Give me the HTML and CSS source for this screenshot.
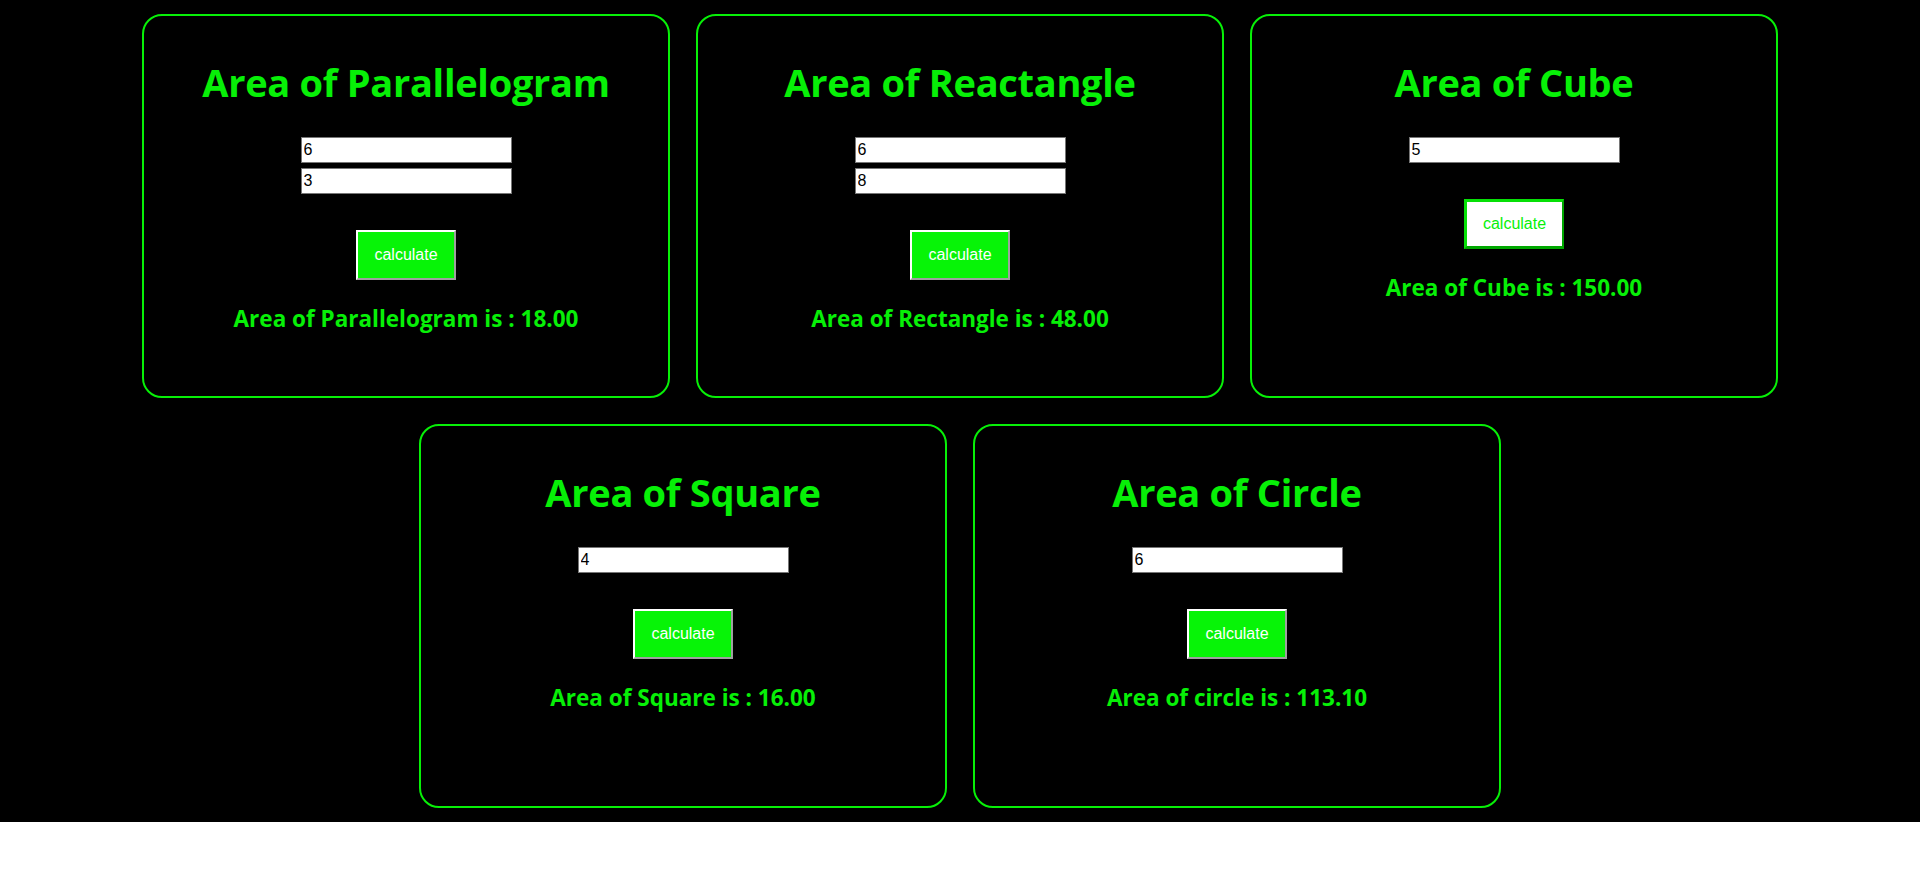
FILE: index.html
```html
<!DOCTYPE html>
<html lang="en">
<head>
<meta charset="utf-8">
<title>Area Calculators</title>
<link rel="stylesheet" href="styles.css">
</head>
<body>
<main class="page">
  <section class="card">
    <h1 class="title">Area of Parallelogram</h1>
    <div class="fields">
      <input class="field" type="text" value="6">
      <input class="field" type="text" value="3">
    </div>
    <button class="btn">calculate</button>
    <p class="result">Area of Parallelogram is : 18.00</p>
  </section>
  <section class="card">
    <h1 class="title">Area of Reactangle</h1>
    <div class="fields">
      <input class="field" type="text" value="6">
      <input class="field" type="text" value="8">
    </div>
    <button class="btn">calculate</button>
    <p class="result">Area of Rectangle is : 48.00</p>
  </section>
  <section class="card">
    <h1 class="title">Area of Cube</h1>
    <div class="fields">
      <input class="field" type="text" value="5">
    </div>
    <button class="btn btn-hover">calculate</button>
    <p class="result">Area of Cube is : 150.00</p>
  </section>
  <section class="card">
    <h1 class="title">Area of Square</h1>
    <div class="fields">
      <input class="field" type="text" value="4">
    </div>
    <button class="btn">calculate</button>
    <p class="result">Area of Square is : 16.00</p>
  </section>
  <section class="card">
    <h1 class="title">Area of Circle</h1>
    <div class="fields">
      <input class="field" type="text" value="6">
    </div>
    <button class="btn">calculate</button>
    <p class="result">Area of circle is : 113.10</p>
  </section>
</main>
</body>
</html>
```

FILE: styles.css
```css
html, body {
  margin: 0;
  padding: 0;
  background: #fff;
}

.page {
  background: #000;
  display: flex;
  flex-wrap: wrap;
  justify-content: center;
  column-gap: 26px;
  row-gap: 26px;
  padding: 14px 0 14px;
}

.card {
  box-sizing: border-box;
  width: 528px;
  height: 384px;
  border: 2px solid #07f007;
  border-radius: 20px;
  display: flex;
  flex-direction: column;
  align-items: center;
  font-family: "Open Sans", "Noto Sans", sans-serif;
  color: #07f007;
}

.title {
  margin: 39px 0 0;
  font-size: 38px;
  font-weight: 700;
  line-height: 54px;
  letter-spacing: -0.3px;
}

.fields {
  margin-top: 28px;
  display: flex;
  flex-direction: column;
  gap: 5px;
}

.field {
  box-sizing: border-box;
  width: 211px;
  height: 26px;
  margin: 0;
  padding: 0 2px;
  border: 1px solid #767676;
  background: #fff;
  color: #000;
  font-family: "Liberation Sans", Arial, sans-serif;
  font-size: 16px;
}

.btn {
  box-sizing: border-box;
  margin-top: 36px;
  width: 100px;
  height: 50px;
  padding: 0;
  background: #07f407;
  color: #fff;
  font-family: "Liberation Sans", Arial, sans-serif;
  font-size: 16px;
  border-style: solid;
  border-width: 2px;
  border-color: #ffffff #a0a0a0 #a0a0a0 #ffffff;
}

.btn-hover {
  background: #fff;
  color: #07f007;
  border-color: #07e007 #00a800 #00a800 #07e007;
  border-width: 3px 2px 3px 3px;
}

.result {
  margin: 24px 0 0;
  font-size: 22.5px;
  font-weight: 700;
  line-height: 30px;
  letter-spacing: 0;
}
```
